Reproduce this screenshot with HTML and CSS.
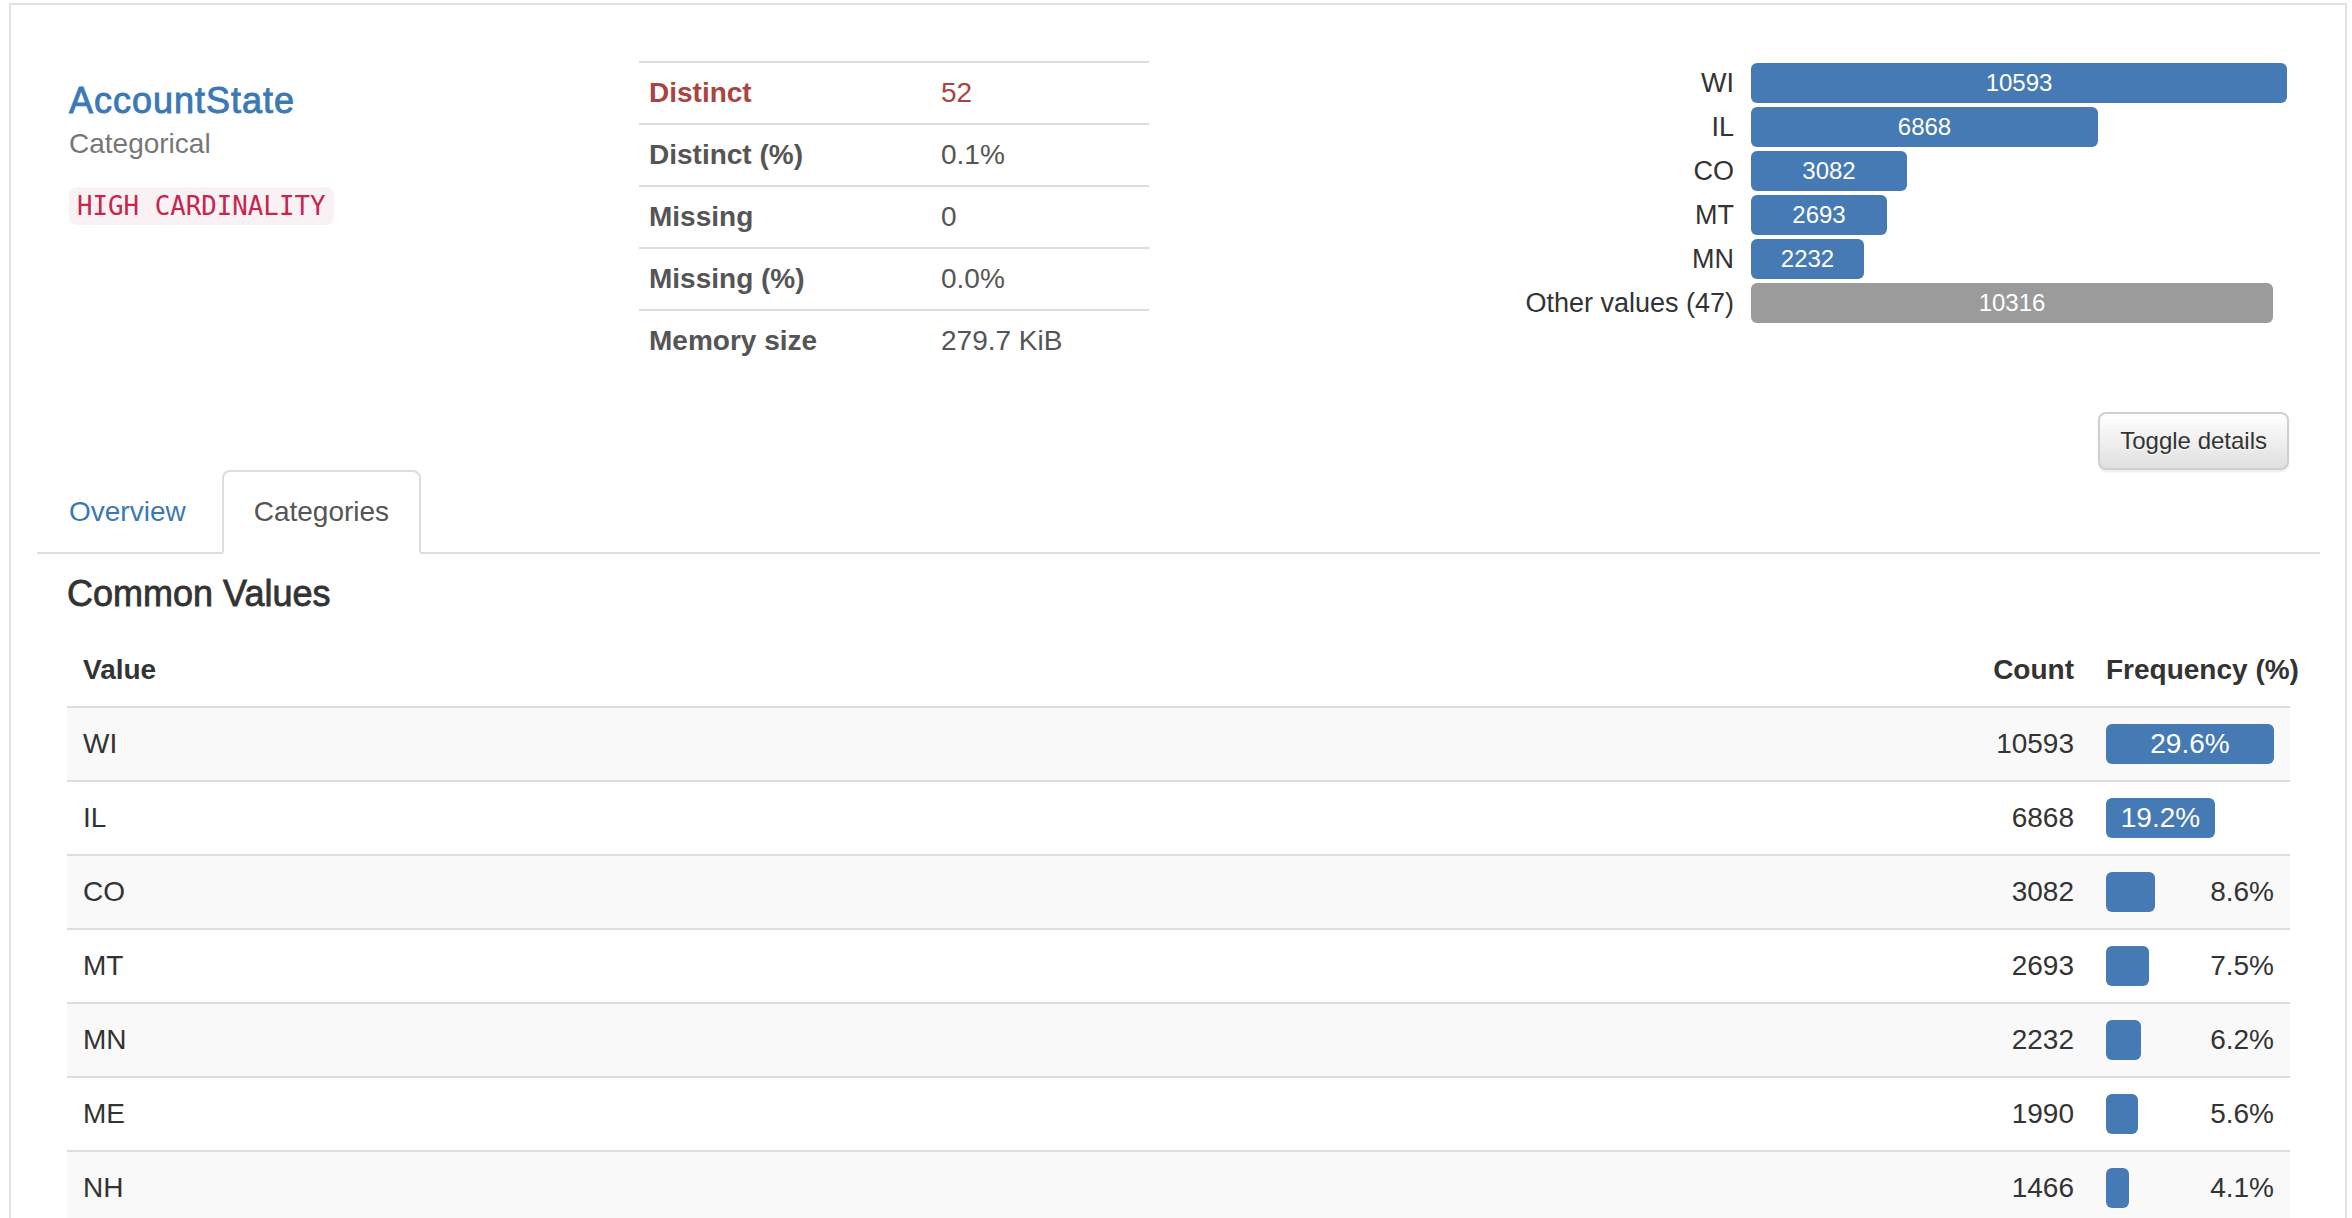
FILE: index.html
```html
<!DOCTYPE html>
<html lang="en">
<head>
<meta charset="utf-8">
<title>AccountState</title>
<link rel="stylesheet" href="styles.css">
</head>
<body>
<div class="variable">
  <div class="var-top">
    <div class="col col-name">
      <p class="var-title"><a class="var-link" href="#">AccountState</a><br><small class="var-type">Categorical</small></p>
      <p class="warnings"><code class="warn-code">HIGH CARDINALITY</code></p>
    </div>
    <div class="col col-stats">
      <table class="stats">
        <tbody>
          <tr class="alert-row"><th>Distinct</th><td>52</td></tr>
          <tr><th>Distinct (%)</th><td>0.1%</td></tr>
          <tr><th>Missing</th><td>0</td></tr>
          <tr><th>Missing (%)</th><td>0.0%</td></tr>
          <tr><th>Memory size</th><td>279.7 KiB</td></tr>
        </tbody>
      </table>
    </div>
    <div class="col col-mini">
      <div class="mini-freq">
        <div class="mini-label">WI</div>
        <div class="mini-cell"><div class="mini-bar" style="width:536px">10593</div></div>
        <div class="mini-label">IL</div>
        <div class="mini-cell"><div class="mini-bar" style="width:347px">6868</div></div>
        <div class="mini-label">CO</div>
        <div class="mini-cell"><div class="mini-bar" style="width:156px">3082</div></div>
        <div class="mini-label">MT</div>
        <div class="mini-cell"><div class="mini-bar" style="width:136px">2693</div></div>
        <div class="mini-label">MN</div>
        <div class="mini-cell"><div class="mini-bar" style="width:113px">2232</div></div>
        <div class="mini-label">Other values (47)</div>
        <div class="mini-cell"><div class="mini-bar mini-bar-other" style="width:522px">10316</div></div>
      </div>
    </div>
  </div>
  <div class="toggle-row">
    <button class="btn-toggle" type="button">Toggle details</button>
  </div>
  <div class="details">
    <ul class="tabs">
      <li class="tab"><a href="#">Overview</a></li>
      <li class="tab tab-active"><a href="#">Categories</a></li>
    </ul>
    <div class="tab-content">
      <h4 class="section-title">Common Values</h4>
      <table class="freq">
        <thead>
          <tr>
            <th class="h-value">Value</th>
            <th class="h-count">Count</th>
            <th class="h-freq">Frequency (%)</th>
          </tr>
        </thead>
        <tbody>
          <tr>
            <td>WI</td><td class="num">10593</td>
            <td><div class="fcell"><div class="fbar fbar-in" style="width:168px">29.6%</div></div></td>
          </tr>
          <tr>
            <td>IL</td><td class="num">6868</td>
            <td><div class="fcell"><div class="fbar fbar-in" style="width:109px">19.2%</div></div></td>
          </tr>
          <tr>
            <td>CO</td><td class="num">3082</td>
            <td><div class="fcell"><div class="fbar" style="width:49px"></div><span class="fpct">8.6%</span></div></td>
          </tr>
          <tr>
            <td>MT</td><td class="num">2693</td>
            <td><div class="fcell"><div class="fbar" style="width:43px"></div><span class="fpct">7.5%</span></div></td>
          </tr>
          <tr>
            <td>MN</td><td class="num">2232</td>
            <td><div class="fcell"><div class="fbar" style="width:35px"></div><span class="fpct">6.2%</span></div></td>
          </tr>
          <tr>
            <td>ME</td><td class="num">1990</td>
            <td><div class="fcell"><div class="fbar" style="width:32px"></div><span class="fpct">5.6%</span></div></td>
          </tr>
          <tr>
            <td>NH</td><td class="num">1466</td>
            <td><div class="fcell"><div class="fbar" style="width:23px"></div><span class="fpct">4.1%</span></div></td>
          </tr>
        </tbody>
      </table>
    </div>
  </div>
</div>
</body>
</html>
```

FILE: styles.css
```css
* {
  box-sizing: border-box;
}

html,
body {
  margin: 0;
  padding: 0;
  background: #fff;
}

body {
  font-family: "Liberation Sans", Arial, Helvetica, sans-serif;
  font-size: 28px;
  line-height: 40px;
  color: #333;
}

.variable {
  margin: 3px 0 0 9px;
  width: 2338px;
  border: 2px solid #e1e1e8;
  border-bottom: 0;
  padding: 56px 26px 0 28px;
}

.var-top {
  display: grid;
  grid-template-columns: 570px 570px 1140px;
  align-items: start;
}

.col {
  padding: 0 30px;
}

/* name column */
.var-title {
  margin: 20px 0 0;
  font-size: 36px;
  line-height: 1.1;
  font-weight: 500;
}

.var-link {
  color: #3a79b6;
  text-decoration: none;
  letter-spacing: 1px;
  -webkit-text-stroke: 0.9px #3a79b6;
}

.var-type {
  font-size: 28px;
  letter-spacing: 0;
  color: #777;
}

.warnings {
  margin: 26px 0 0;
}

.warn-code {
  font-family: "DejaVu Sans Mono", "Liberation Mono", monospace;
  font-size: 25.8px;
  color: #c7254e;
  background: #f9f2f4;
  padding: 4px 8px;
  border-radius: 8px;
}

/* stats table */
.stats {
  width: 510px;
  border-collapse: collapse;
  margin: 0 0 40px;
}

.stats th,
.stats td {
  padding: 10px;
  border-top: 2px solid #ddd;
  text-align: left;
  vertical-align: top;
  line-height: 40px;
  color: #555;
}

.stats th {
  width: 292px;
  font-weight: bold;
}

.stats .alert-row th,
.stats .alert-row td {
  color: #a94442;
}

/* mini frequency chart */
.mini-freq {
  display: grid;
  grid-template-columns: 540px 540px;
}

.mini-label {
  padding: 2px 15px 2px 0;
  text-align: right;
  font-size: 27px;
  line-height: 40px;
  white-space: nowrap;
  color: #333;
}

.mini-cell {
  padding: 2px 0 2px 2px;
}

.mini-bar {
  height: 40px;
  line-height: 40px;
  background: #467ab4;
  color: #fff;
  font-size: 24px;
  text-align: center;
  border-radius: 6px;
}

.mini-bar-other {
  background: #9b9b9b;
}

/* toggle button */
.toggle-row {
  display: flex;
  justify-content: flex-end;
  padding: 1px 30px 0;
}

.btn-toggle {
  font-family: "Liberation Sans", Arial, Helvetica, sans-serif;
  font-size: 24px;
  line-height: 36px;
  padding: 9px 20px;
  color: #333;
  background: linear-gradient(to bottom, #ffffff 0%, #e0e0e0 100%);
  border: 2px solid #cfcfcf;
  border-radius: 8px;
  text-shadow: 0 1px 0 #fff;
  box-shadow: inset 0 2px 0 rgba(255, 255, 255, 0.15), 0 2px 2px rgba(0, 0, 0, 0.075);
  cursor: pointer;
}

/* tabs */
.details {
  margin: 0 -1px 0 -2px;
}

.tabs {
  display: flex;
  list-style: none;
  margin: 0;
  padding: 0;
  border-bottom: 2px solid #ddd;
}

.tab {
  margin-bottom: -2px;
}

.tab a {
  display: block;
  margin-right: 4px;
  padding: 20px 30px;
  line-height: 40px;
  border: 2px solid transparent;
  border-radius: 8px 8px 0 0;
  color: #3a79b6;
  text-decoration: none;
}

.tab-active a {
  color: #555;
  background: #fff;
  border-color: #ddd #ddd transparent;
}

.tab-content {
  padding: 0 30px;
}

.section-title {
  margin: 20px 0;
  font-size: 36px;
  line-height: 1.1;
  font-weight: 500;
  color: #333;
  -webkit-text-stroke: 0.8px #333;
}

/* common values table */
.freq {
  width: 100%;
  border-collapse: collapse;
  table-layout: fixed;
}

.freq th,
.freq td {
  padding: 16px;
  line-height: 40px;
  vertical-align: top;
  text-align: left;
}

.freq thead th {
  border-bottom: 2px solid #ddd;
  font-weight: bold;
  white-space: nowrap;
  color: #333;
}

.freq .h-count {
  width: 113px;
  text-align: right;
}

.freq .h-freq {
  width: 200px;
}

.freq tbody td {
  border-top: 2px solid #ddd;
}

.freq tbody tr:nth-child(odd) {
  background: #f9f9f9;
}

.freq td.num {
  text-align: right;
}

.fcell {
  display: flex;
  align-items: center;
  height: 40px;
}

.fbar {
  height: 40px;
  background: #467ab4;
  border-radius: 6px;
  flex: none;
}

.fbar-in {
  color: #fff;
  text-align: center;
  line-height: 40px;
}

.fpct {
  margin-left: auto;
}
```
